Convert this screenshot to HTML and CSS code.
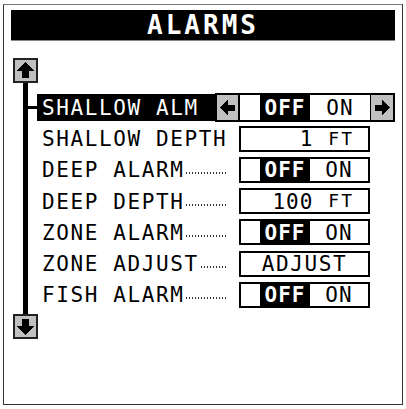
FILE: index.html
```html
<!DOCTYPE html>
<html>
<head>
<meta charset="utf-8">
<link rel="stylesheet" href="styles.css">
</head>
<body>
<div class="frame">
  <div class="title">ALARMS</div>
  <div class="main">
    <div class="scroll">
      <div class="sbox">
        <svg width="21" height="21" viewBox="0 0 21 21" shape-rendering="crispEdges"><polygon points="10.5,2 2,11 7,11 7,18 14,18 14,11 19,11" fill="#000"/></svg>
      </div>
      <div class="sline"></div>
      <div class="sbox">
        <svg width="21" height="21" viewBox="0 0 21 21" shape-rendering="crispEdges"><polygon points="10.5,19 2,10 7,10 7,3 14,3 14,10 19,10" fill="#000"/></svg>
      </div>
    </div>
    <div class="list">
      <div class="row">
        <div class="slot"><div class="conn"></div></div>
        <div class="label sel">SHALLOW ALM</div>
        <div class="ctl wide">
          <div class="arr arr-l">
            <svg width="21" height="25" viewBox="0 0 21 25" shape-rendering="crispEdges"><polygon points="3,12.5 11,5 11,9.5 18,9.5 18,15.5 11,15.5 11,20" fill="#000"/></svg>
          </div>
          <div class="blank b20"></div>
          <div class="seg off">OFF</div>
          <div class="seg on on60">ON</div>
          <div class="arr arr-r">
            <svg width="22" height="25" viewBox="0 0 22 25" shape-rendering="crispEdges"><polygon points="19,12.5 11,5 11,9.5 4,9.5 4,15.5 11,15.5 11,20" fill="#000"/></svg>
          </div>
        </div>
      </div>
      <div class="row">
        <div class="slot"></div>
        <div class="label">SHALLOW DEPTH</div>
        <div class="ctl small num"><span class="digits">1</span><span class="unit">FT</span></div>
      </div>
      <div class="row">
        <div class="slot"></div>
        <div class="label">DEEP ALARM<span class="lead"></span></div>
        <div class="ctl small"><div class="blank b19"></div><div class="seg off">OFF</div><div class="seg on">ON</div></div>
      </div>
      <div class="row">
        <div class="slot"></div>
        <div class="label">DEEP DEPTH<span class="lead"></span></div>
        <div class="ctl small num"><span class="digits">100</span><span class="unit">FT</span></div>
      </div>
      <div class="row">
        <div class="slot"></div>
        <div class="label">ZONE ALARM<span class="lead"></span></div>
        <div class="ctl small"><div class="blank b19"></div><div class="seg off">OFF</div><div class="seg on">ON</div></div>
      </div>
      <div class="row">
        <div class="slot"></div>
        <div class="label">ZONE ADJUST<span class="lead"></span></div>
        <div class="ctl small center">ADJUST</div>
      </div>
      <div class="row">
        <div class="slot"></div>
        <div class="label">FISH ALARM<span class="lead"></span></div>
        <div class="ctl small"><div class="blank b19"></div><div class="seg off">OFF</div><div class="seg on">ON</div></div>
      </div>
    </div>
  </div>
</div>
</body>
</html>
```

FILE: styles.css
```css
html, body {
  margin: 0;
  padding: 0;
  background: #fff;
}
body {
  font-family: "DejaVu Sans Mono", "Liberation Mono", monospace;
  color: #000;
}
.frame {
  margin: 4px 0 0 3px;
  width: 398px;
  height: 399px;
  border: 1px solid #333;
  border-top-color: #777;
  overflow: hidden;
}
.title {
  margin: 5px 0 0 7px;
  width: 384px;
  height: 30px;
  background: #000;
  border-bottom: 1px solid #888;
  color: #fff;
  font-weight: bold;
  font-size: 26px;
  letter-spacing: 3px;
  padding-left: 0;
  display: flex;
  align-items: center;
  justify-content: center;
  line-height: 1;
}
.main {
  display: flex;
  margin: 17px 0 0 9px;
}
.scroll {
  width: 25px;
  display: flex;
  flex-direction: column;
  flex: none;
}
.sbox {
  width: 21px;
  height: 21px;
  border: 2px solid #222;
  background: #c0c0c0;
  display: flex;
}
.sline {
  width: 5px;
  height: 231px;
  margin-left: 10px;
  background: #000;
}
.list {
  margin-left: -10px;
  padding-top: 34px;
}
.row {
  display: flex;
  align-items: center;
  height: 31.2px;
}
.slot {
  width: 9px;
  flex: none;
  display: flex;
  align-items: center;
}
.conn {
  width: 9px;
  height: 3px;
  background: #000;
}
.label {
  width: 187px;
  padding-left: 5px;
  font-size: 21px;
  letter-spacing: 1.6px;
  line-height: 1;
  padding-top: 2px;
  display: flex;
  align-items: center;
  white-space: nowrap;
}
.label.sel {
  width: 173px;
  height: 25px;
  background: #000;
  color: #fff;
}
.lead {
  flex: 1;
  height: 2px;
  margin: 5px 1px 0 2px;
  background: repeating-linear-gradient(90deg, #333 0 1px, transparent 1px 3px);
}
.ctl {
  border: 2px solid #000;
  display: flex;
  font-size: 21px;
  line-height: 1;
  flex: none;
}
.ctl.wide {
  width: 176px;
  height: 25px;
}
.ctl.small {
  width: 127px;
  height: 22px;
  margin-left: 10px;
}
.arr {
  background: #c0c0c0;
  display: flex;
  flex: none;
}
.arr-l {
  width: 21px;
  border-right: 2px solid #000;
}
.arr-r {
  width: 22px;
  border-left: 1px solid #000;
}
.blank { flex: none; background: #fff; }
.b20 { width: 20px; }
.b19 { width: 19px; }
.seg {
  flex: none;
  display: flex;
  align-items: center;
  justify-content: center;
  padding-top: 2px;
  box-sizing: border-box;
  letter-spacing: 1px;
}
.off {
  width: 50px;
  background: #000;
  color: #fff;
  font-weight: bold;
}
.on {
  width: 58px;
}
.on60 { width: 60px; }
.num {
  justify-content: flex-end;
  align-items: center;
  padding-right: 14px;
  box-sizing: content-box;
  width: 113px !important;
}
.digits {
  letter-spacing: 1px;
  padding-top: 2px;
}
.unit {
  font-size: 18px;
  letter-spacing: 2px;
  margin-left: 15px;
  align-self: flex-start;
  margin-top: 2px;
}
.center {
  justify-content: center;
  align-items: center;
  padding-top: 2px;
  box-sizing: border-box;
  height: 26px !important;
  width: 131px !important;
  letter-spacing: 1.6px;
}
```
